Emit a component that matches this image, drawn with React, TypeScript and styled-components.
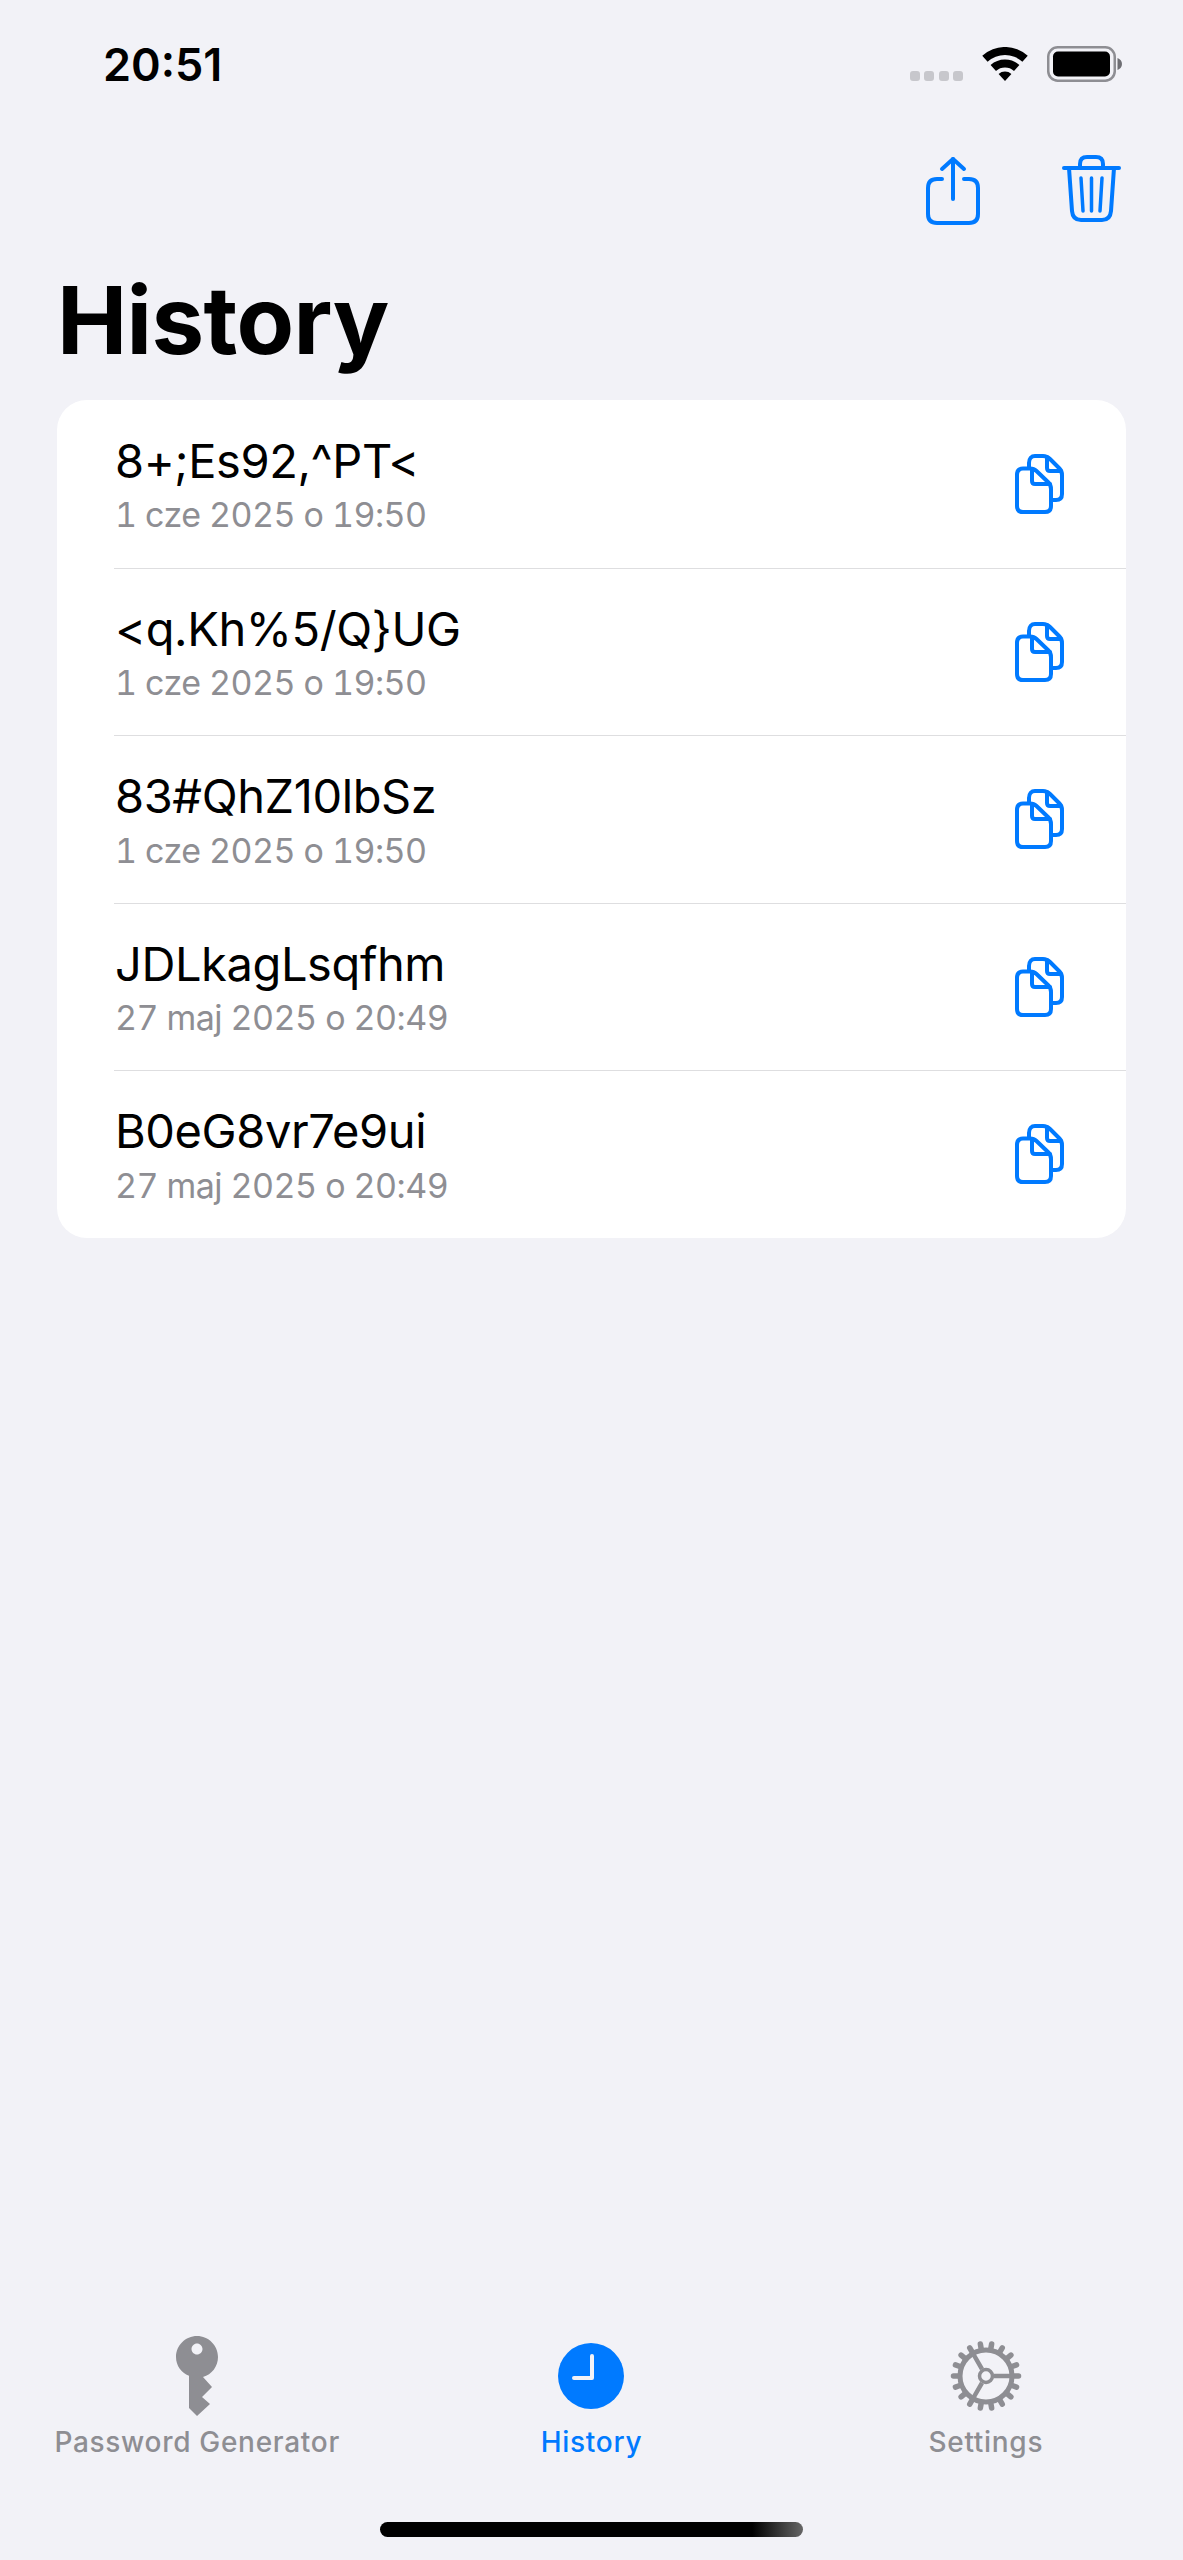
import React from 'react'
import styled, { createGlobalStyle } from 'styled-components'

const BLUE = '#007aff'
const GREY = '#8e8e93'

const GlobalStyle = createGlobalStyle`
  html, body {
    margin: 0;
    padding: 0;
    background: #f2f2f7;
  }
  * {
    box-sizing: border-box;
  }
`

const Screen = styled.div`
  display: flex;
  flex-direction: column;
  width: 1183px;
  height: 2560px;
  background: #f2f2f7;
  font-family: Inter, 'Liberation Sans', sans-serif;
  color: #000;
  overflow: hidden;
`

const StatusBar = styled.div`
  display: flex;
  align-items: center;
  justify-content: space-between;
  height: 128px;
  padding: 0 61px 0 103px;
`

const Time = styled.div`
  font-size: 45px;
  font-weight: 600;
  line-height: 1;
`

const StatusIcons = styled.div`
  display: flex;
  align-items: center;
  gap: 19px;
  height: 36px;
`

const SignalDots = styled.div`
  display: flex;
  align-self: flex-end;
  gap: 4.3px;
  margin-bottom: 1px;
`

const Dot = styled.span`
  width: 10px;
  height: 10px;
  border-radius: 3px;
  background: #c7c7cc;
`

const Toolbar = styled.div`
  display: flex;
  justify-content: flex-end;
  gap: 82px;
  padding: 27px 62px 0 0;
`

const ToolButton = styled.button`
  border: none;
  background: none;
  padding: 0;
  display: flex;
  color: ${BLUE};
`

const Title = styled.h1`
  margin: 46px 0 31px;
  padding-left: 57px;
  font-size: 94px;
  font-weight: 700;
  line-height: 98px;
  letter-spacing: -0.6px;
`

const Card = styled.div`
  margin: 0 57px;
  background: #fff;
  border-radius: 30px;
  overflow: hidden;
`

const Row = styled.div`
  display: flex;
  align-items: center;
  justify-content: space-between;
  height: 167.5px;
  margin-left: 57px;
  padding-right: 62px;
  & + & {
    border-top: 1.5px solid #dedee0;
  }
`

const RowText = styled.div`
  display: flex;
  flex-direction: column;
  gap: 4.5px;
  padding-left: 1px;
`

const Password = styled.div`
  font-size: 47px;
  line-height: 58px;
  letter-spacing: -0.4px;
`

const Stamp = styled.div`
  font-size: 34px;
  line-height: 42px;
  font-variant-numeric: tabular-nums;
  letter-spacing: -0.55px;
  color: ${GREY};
`

const CopyButton = styled.button`
  border: none;
  background: none;
  padding: 0;
  display: flex;
  color: ${BLUE};
`

const TabBar = styled.div`
  margin-top: auto;
  display: grid;
  grid-template-columns: repeat(3, 1fr);
  padding-bottom: 62px;
`

const Tab = styled.div<{ $active?: boolean }>`
  display: flex;
  flex-direction: column;
  align-items: center;
  gap: 5px;
  color: ${(p) => (p.$active ? BLUE : GREY)};
`

const TabIcon = styled.div`
  height: 86px;
  display: flex;
  align-items: center;
`

const TabLabel = styled.div`
  font-size: 28px;
  line-height: 36px;
  font-weight: 500;
  letter-spacing: 0.7px;
`

const HomeIndicator = styled.div`
  align-self: center;
  width: 423px;
  height: 15px;
  border-radius: 8px;
  margin-bottom: 23px;
  background: linear-gradient(90deg, #000 0 88%, #666 100%);
`

const WifiIcon = () => (
  <svg width="46" height="34" viewBox="0 0 46 34" fill="#000">
    <path d="M.25 8.700A34 34 0 0 1 45.750 8.700L40.400 14.700A26 26 0 0 0 5.600 14.700Z" />
    <path d="M8.600 18A21.500 21.500 0 0 1 37.400 18L32 24A13.500 13.500 0 0 0 14 24Z" />
    <path d="M16.600 26.900A9.500 9.500 0 0 1 29.400 26.900L23 34Z" />
  </svg>
)

const BatteryIcon = () => (
  <svg width="75" height="36" viewBox="0 0 75 36">
    <rect x="1.250" y="1.250" width="66.500" height="33.500" rx="9.500" fill="none" stroke="#8e8e93" strokeWidth="2.500" />
    <rect x="6" y="5.500" width="57" height="25" rx="5" fill="#000" />
    <path d="M70.500 12c2.700 1 4.500 3.200 4.500 6s-1.800 5-4.500 6z" fill="#6e6e73" />
  </svg>
)

const ShareIcon = () => (
  <svg width="54" height="70" viewBox="0 0 54 70" fill="none" stroke="currentColor" strokeWidth="4" strokeLinecap="round" strokeLinejoin="round">
    <path d="M16 24H11C5 24 2 27 2 33V59C2 65 5 68 11 68H43C49 68 52 65 52 59V33C52 27 49 24 43 24H38" />
    <path d="M27 44V4" />
    <path d="M16 14L27 4L38 14" />
  </svg>
)

const TrashIcon = () => (
  <svg width="59" height="70" viewBox="0 0 59 70" fill="none" stroke="currentColor" strokeWidth="4" strokeLinecap="round" strokeLinejoin="round">
    <path d="M2 13H57" />
    <path d="M18 13V9C18 4.500 20.500 2 25 2H34C38.500 2 41 4.500 41 9V13" />
    <path d="M7 13L10 56C10.500 62 13.500 65 19 65H40C45.500 65 48.500 62 49 56L52 13" />
    <path d="M19 23L21 56M29.500 23V56M40 23L38 56" strokeWidth="3.500" />
  </svg>
)

const CopyIcon = () => (
  <svg width="49" height="60" viewBox="0 0 49 60" fill="none" stroke="currentColor" strokeWidth="4" strokeLinecap="round" strokeLinejoin="round">
    <path d="M14 13V9C14 4.500 16.500 2 20 2H28C31 2 33 3 35 5L44.500 14.500C46.500 16.500 47 18 47 21V40C47 44 45 46 41 46H37" />
    <path d="M32 3V14C32 16 33 17 35 17H46" />
    <path d="M2 21C2 17 4 14.500 8 14.500H15C18 14.500 19.500 15 21.500 17L33.500 28.500C35.500 30.500 36 32 36 35V52C36 56 34 58 30 58H8C4 58 2 56 2 52Z" />
    <path d="M17 15V27C17 29 18 30 20 30H35" />
  </svg>
)

const KeyIcon = () => (
  <svg width="42" height="80" viewBox="0 0 42 80" fill={GREY}>
    <path
      fillRule="evenodd"
      d="M21 0C9.500 0 0 9.400 0 21C0 29.500 5.200 36.800 13 39.800V72L21 80L34 68L26 61L36 51L27 41C35.800 38.500 42 30.500 42 21C42 9.400 32.500 0 21 0ZM21 7.500C24 7.500 26.500 10 26.500 13C26.500 16 24 18.500 21 18.500C18 18.500 15.500 16 15.500 13C15.500 10 18 7.500 21 7.500Z"
    />
  </svg>
)

const ClockIcon = () => (
  <svg width="66" height="66" viewBox="0 0 66 66">
    <circle cx="33" cy="33" r="33" fill={BLUE} />
    <path d="M34 13V35H16" fill="none" stroke="#f2f2f7" strokeWidth="4" strokeLinecap="round" strokeLinejoin="round" />
  </svg>
)

const GearIcon = () => {
  const teeth = Array.from({ length: 18 }, (_, i) => i * 20)
  return (
    <svg width="72" height="72" viewBox="0 0 72 72" fill="none" stroke={GREY}>
      {teeth.map((a) => (
        <line key={a} x1="36" y1="9" x2="36" y2="3.500" strokeWidth="5.500" strokeLinecap="round" transform={`rotate(${a + 90} 36 36)`} />
      ))}
      <circle cx="36" cy="36" r="26" strokeWidth="5" />
      <circle cx="36" cy="36" r="6.500" strokeWidth="3.500" />
      <path d="M44 36H62M32 29.100L23 13.500M32 42.900L23 58.500" strokeWidth="4.500" />
    </svg>
  )
}

const history = [
  { password: '8+;Es92,^PT<', stamp: '1 cze 2025 o 19:50' },
  { password: '<q.Kh%5/Q}UG', stamp: '1 cze 2025 o 19:50' },
  { password: '83#QhZ10lbSz', stamp: '1 cze 2025 o 19:50' },
  { password: 'JDLkagLsqfhm', stamp: '27 maj 2025 o 20:49' },
  { password: 'B0eG8vr7e9ui', stamp: '27 maj 2025 o 20:49' },
]

const App: React.FC = () => {
  return (
    <Screen>
      <GlobalStyle />
      <StatusBar>
        <Time>20:51</Time>
        <StatusIcons>
          <SignalDots>
            <Dot />
            <Dot />
            <Dot />
            <Dot />
          </SignalDots>
          <WifiIcon />
          <BatteryIcon />
        </StatusIcons>
      </StatusBar>
      <Toolbar>
        <ToolButton aria-label="Share">
          <ShareIcon />
        </ToolButton>
        <ToolButton aria-label="Delete all">
          <TrashIcon />
        </ToolButton>
      </Toolbar>
      <Title>History</Title>
      <Card>
        {history.map((item) => (
          <Row key={item.password}>
            <RowText>
              <Password>{item.password}</Password>
              <Stamp>{item.stamp}</Stamp>
            </RowText>
            <CopyButton aria-label="Copy">
              <CopyIcon />
            </CopyButton>
          </Row>
        ))}
      </Card>
      <TabBar>
        <Tab>
          <TabIcon>
            <KeyIcon />
          </TabIcon>
          <TabLabel>Password Generator</TabLabel>
        </Tab>
        <Tab $active>
          <TabIcon>
            <ClockIcon />
          </TabIcon>
          <TabLabel>History</TabLabel>
        </Tab>
        <Tab>
          <TabIcon>
            <GearIcon />
          </TabIcon>
          <TabLabel>Settings</TabLabel>
        </Tab>
      </TabBar>
      <HomeIndicator />
    </Screen>
  )
}

export default App
